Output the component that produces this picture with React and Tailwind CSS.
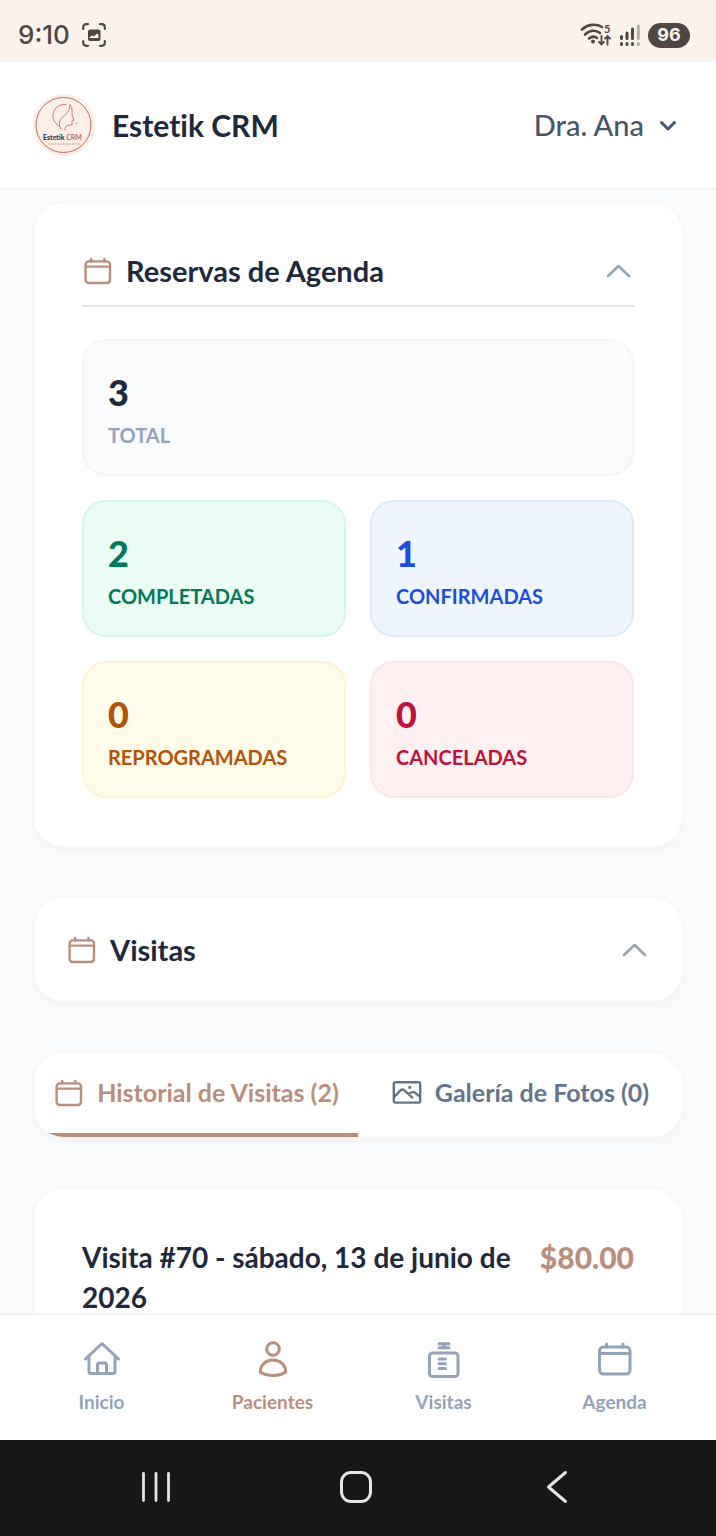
import React, { useState } from "react";

const stats = [
  { label: "TOTAL", value: 3, box: "col-span-2 bg-[#f9fafc] border-[#f3f5f8]", number: "text-[#1e293b]", text: "text-[#94a3b8]" },
  { label: "COMPLETADAS", value: 2, box: "bg-[#e9fdf4] border-[#d4f8e6]", number: "text-[#047857]", text: "text-[#047857]" },
  { label: "CONFIRMADAS", value: 1, box: "bg-[#eef5ff] border-[#dfe9fb]", number: "text-[#1d4ed8]", text: "text-[#1d4ed8]" },
  { label: "REPROGRAMADAS", value: 0, box: "bg-[#fffbe9] border-[#fdf5cf]", number: "text-[#b4530a]", text: "text-[#b4530a]" },
  { label: "CANCELADAS", value: 0, box: "bg-[#fff0f1] border-[#fee5e8]", number: "text-[#be123c]", text: "text-[#be123c]" },
];

const Icon = ({ className, children }) => (
  <svg
    viewBox="0 0 40 40"
    className={className}
    fill="none"
    stroke="currentColor"
    strokeWidth="3"
    strokeLinecap="round"
    strokeLinejoin="round"
    aria-hidden="true"
  >
    {children}
  </svg>
);

const CalendarIcon = ({ className }) => (
  <Icon className={className}>
    <rect x="4.5" y="8" width="30.5" height="27" rx="4" />
    <path d="M11.5 5v3M28 5v3M5 14.5h30" />
  </Icon>
);

const HomeIcon = ({ className }) => (
  <Icon className={className}>
    <path d="M3.5 20 20 4.5 36.5 20M7 18.5v14a2 2 0 0 0 2 2h22a2 2 0 0 0 2-2v-14" />
    <path d="M15.5 34v-8a2 2 0 0 1 2-2h5a2 2 0 0 1 2 2v8" />
  </Icon>
);

const UserIcon = ({ className }) => (
  <Icon className={className}>
    <circle cx="20" cy="10" r="6.3" />
    <path d="M7.3 33C7.3 26 13 21 20 21s12.7 5 12.7 12c-3.5 2.7-8 3.4-12.7 3.4S10.8 35.7 7.3 33Z" />
  </Icon>
);

const ClipboardIcon = ({ className }) => (
  <Icon className={className}>
    <rect x="5.5" y="14" width="28.5" height="23.5" rx="3" />
    <path d="M15 4.8h10M15 8.8h10M20 5v4M15 20h6.5M15 24.7h6.5M15 29.5h6.5" />
  </Icon>
);

const ImageIcon = ({ className }) => (
  <Icon className={className}>
    <rect x="3.5" y="6.5" width="33" height="25.5" rx="2" />
    <path d="m4.5 24.5 7-7.5c2-1.8 3.5-1.8 5.5 0l9.5 8.5m-4-4c3-3 4.5-3.5 8-1.5l5.5 4.5" />
    <circle cx="23.5" cy="13" r="2" fill="currentColor" stroke="none" />
  </Icon>
);

const ChevronUp = () => (
  <svg viewBox="0 0 32 32" className="size-8 text-[#94a3b8]" fill="none" stroke="currentColor" strokeWidth="2.6" strokeLinecap="round" strokeLinejoin="round" aria-hidden="true">
    <path d="M6 21 16.5 11 27 21" />
  </svg>
);

const Logo = () => (
  <svg viewBox="0 0 64 64" className="size-16" fill="none" aria-hidden="true">
    <circle cx="32" cy="32" r="31" fill="#fdeee7" />
    <circle cx="31.5" cy="32" r="27.5" stroke="#b9705c" />
    <g stroke="#b9705c" strokeWidth="0.9" strokeLinecap="round" strokeLinejoin="round">
      <path d="M34 11.5c-8-1-13 5-13 11.5 0 5 3 8 6 10" />
      <path d="M38 12c0 6-3 8-7 12-4 3-5 7-2 12M38 12c3 4 2 7 2 10l2 5-2 1v4c-5 0-7 1-7 5M44 31l1-1" />
    </g>
    <text x="11" y="46.5" fontSize="7" fontWeight="700" fill="#1e293b">
      Estetik <tspan fill="#b9705c">CRM</tspan>
    </text>
    <path d="M16 51h32" stroke="#b59a90" strokeWidth="0.9" strokeDasharray="2 1" />
  </svg>
);

const StatusBar = () => (
  <div className="flex h-[62px] shrink-0 items-center justify-between bg-[#fcf2ec] pt-2 pr-[26px] pl-[18px] text-[#504743]">
    <div className="flex items-center gap-3">
      <span className="font-['Inter',sans-serif] text-[26px] leading-8 font-medium">9:10</span>
      <svg viewBox="0 0 24 24" className="size-6" fill="none" stroke="currentColor" strokeWidth="2.2" strokeLinecap="round" aria-hidden="true">
        <path d="M1.2 6V4.2a3 3 0 0 1 3-3H6M18 1.2h1.8a3 3 0 0 1 3 3V6M22.8 18v1.8a3 3 0 0 1-3 3H18M6 22.8H4.2a3 3 0 0 1-3-3V18" />
        <rect x="6" y="6.5" width="12.5" height="11.5" rx="2" fill="currentColor" stroke="none" />
        <path d="m7.5 14.5 2.5-2 2 1 3-3 1.5 1.5v3h-9Z" fill="#fcf2ec" stroke="none" />
      </svg>
    </div>
    <div className="flex items-center gap-2">
      <svg viewBox="0 0 32 28" className="h-7 w-8" fill="none" stroke="currentColor" strokeLinecap="round" aria-hidden="true">
        <path d="M2 8.5C8 3 16 2.5 22 6M5 13.5c4.5-4.500 11-5 15-1.5M9 17.5c3-2.500 5.500-2.500 8-.5" strokeWidth="2.6" />
        <circle cx="13" cy="20.5" r="2" fill="currentColor" stroke="none" />
        <path d="M21.500 15v8M19 20.8l2.500 2.500 2.500-2.500M27.500 23.5v-8M25 17.7l2.500-2.500 2.500 2.500" strokeWidth="1.900" />
        <text x="24" y="12" fontSize="11" fontWeight="700" fill="currentColor" stroke="none">5</text>
      </svg>
      <svg viewBox="0 0 20 24" className="h-6 w-5" stroke="currentColor" strokeWidth="3" strokeLinecap="round" aria-hidden="true">
        <path d="M1.5 13.5v2M7 10v5.5M12.5 6v9.5M1.5 20.5v1M7 20.5v1M12.5 20.5v1" />
        <path d="M18.3 3v12.5M18.3 20.5v1" opacity="0.4" />
      </svg>
      <span className="flex h-[25px] w-[42px] items-center justify-center rounded-full bg-[#504743] font-['Inter',sans-serif] text-lg font-bold text-[#fcf2ec]">
        96
      </span>
    </div>
  </div>
);

const Header = () => (
  <header className="flex h-32 shrink-0 items-center justify-between border-b-2 border-[#f5f5f5] bg-white pr-9 pl-8">
    <div className="flex items-center gap-4">
      <Logo />
      <h1 className="text-[30px] leading-10 font-bold text-[#1e293b]">Estetik CRM</h1>
    </div>
    <button type="button" className="flex items-center gap-3 text-[29px] leading-10 font-medium text-[#475569]">
      Dra. Ana
      <svg viewBox="0 0 24 24" className="size-6" fill="none" stroke="currentColor" strokeWidth="3" strokeLinecap="round" strokeLinejoin="round" aria-hidden="true">
        <path d="m5.5 9.5 6.5 6.5 6.5-6.5" />
      </svg>
    </button>
  </header>
);

const Card = ({ className, children }) => (
  <section className={`rounded-4xl border-2 border-[#faf6f4] bg-white shadow-[0_2px_4px_rgba(0,0,0,0.03)] ${className}`}>
    {children}
  </section>
);

const SectionTitle = ({ title, open, onToggle }) => (
  <button type="button" aria-expanded={open} onClick={onToggle} className="flex w-full items-center justify-between text-left">
    <span className="flex items-center gap-3">
      <CalendarIcon className="size-8 text-[#b98e7c]" />
      <span className="text-[29px] leading-[39px] font-bold text-[#1e293b]">{title}</span>
    </span>
    <ChevronUp />
  </button>
);

const StatCard = ({ stat }) => (
  <div className={`rounded-3xl border-2 p-6 ${stat.box}`}>
    <p className={`text-4xl leading-[55px] font-black ${stat.number}`}>{stat.value}</p>
    <p className={`text-xl leading-[30px] font-bold ${stat.text}`}>{stat.label}</p>
  </div>
);

const tabs = [
  { id: "historial", label: "Historial de Visitas (2)", icon: CalendarIcon },
  { id: "galeria", label: "Galería de Fotos (0)", icon: ImageIcon },
];

const navItems = [
  { label: "Inicio", icon: HomeIcon },
  { label: "Pacientes", icon: UserIcon, active: true },
  { label: "Visitas", icon: ClipboardIcon },
  { label: "Agenda", icon: CalendarIcon },
];

const BottomNav = () => (
  <nav className="grid h-[127px] shrink-0 grid-cols-4 border-t-2 border-[#f7f3f1] bg-white px-4">
    {navItems.map(({ label, icon: NavIcon, active }) => (
      <a
        key={label}
        href="#"
        aria-current={active ? "page" : undefined}
        className={`flex flex-col items-center gap-2 pt-6 text-[19px] leading-[30px] font-bold ${active ? "text-[#b98e7c]" : "text-[#94a3b8]"}`}
      >
        <NavIcon className="size-10" />
        {label}
      </a>
    ))}
  </nav>
);

const SystemNav = () => (
  <div className="grid h-24 shrink-0 grid-cols-3 items-center justify-items-center bg-[#171718] px-14 text-[#e4e4e4]">
    <button type="button" aria-label="Recientes">
      <svg viewBox="0 0 36 36" className="size-9" stroke="currentColor" strokeWidth="2.8" strokeLinecap="round">
        <path d="M4.5 3.5v27M17 3.5v27M29.5 3.5v27" />
      </svg>
    </button>
    <button type="button" aria-label="Inicio del sistema">
      <svg viewBox="0 0 36 36" className="size-9" fill="none" stroke="currentColor" strokeWidth="3">
        <rect x="1.5" y="2.5" width="29" height="29" rx="9.5" />
      </svg>
    </button>
    <button type="button" aria-label="Atrás">
      <svg viewBox="0 0 36 36" className="size-9" fill="none" stroke="currentColor" strokeWidth="3" strokeLinecap="round" strokeLinejoin="round">
        <path d="M24.5 2.5 7.5 17l17 14.5" />
      </svg>
    </button>
  </div>
);

const App = () => {
  const [statsOpen, setStatsOpen] = useState(true);
  const [visitsOpen, setVisitsOpen] = useState(true);
  const [tab, setTab] = useState("historial");

  return (
    <div className="flex h-screen flex-col bg-[#f9fafc] font-['Lato','Open_Sans',sans-serif] [font-variant-ligatures:no-common-ligatures]">
      <StatusBar />
      <Header />

      <main className="flex min-h-0 flex-1 flex-col gap-12 overflow-y-auto px-8 pt-[11px] [scrollbar-width:none] *:shrink-0">
        <Card className="p-12">
          <div className="border-b-2 border-[#e5e5e5] pb-[15px]">
            <SectionTitle title="Reservas de Agenda" open={statsOpen} onToggle={() => setStatsOpen(!statsOpen)} />
          </div>
          {statsOpen && (
            <div className="mt-8 grid grid-cols-2 gap-6">
              {stats.map((stat) => (
                <StatCard key={stat.label} stat={stat} />
              ))}
            </div>
          )}
        </Card>

        <Card className="p-8">
          <SectionTitle title="Visitas" open={visitsOpen} onToggle={() => setVisitsOpen(!visitsOpen)} />
        </Card>

        {visitsOpen && (
          <>
            <Card className="overflow-hidden">
              <div role="tablist" className="grid grid-cols-2">
                {tabs.map(({ id, label, icon: TabIcon }) => (
                  <button
                    key={id}
                    type="button"
                    role="tab"
                    aria-selected={tab === id}
                    onClick={() => setTab(id)}
                    className={`flex h-[84px] items-center justify-center gap-3 border-b-4 text-[25px] font-bold whitespace-nowrap ${
                      tab === id ? "border-[#b98e7c] text-[#b98e7c]" : "border-transparent text-[#64748b]"
                    }`}
                  >
                    <TabIcon className="size-8 shrink-0" />
                    {label}
                  </button>
                ))}
              </div>
            </Card>

            <Card className="p-12">
              <div className="flex items-start justify-between gap-4 leading-10 font-bold">
                <h2 className="text-[28px] text-[#1e293b]">Visita #70 - sábado, 13 de junio de 2026</h2>
                <span className="text-[30px] font-black text-[#b98e7c]">$80.00</span>
              </div>
            </Card>
          </>
        )}
      </main>

      <BottomNav />
      <SystemNav />
    </div>
  );
};

export default App;
